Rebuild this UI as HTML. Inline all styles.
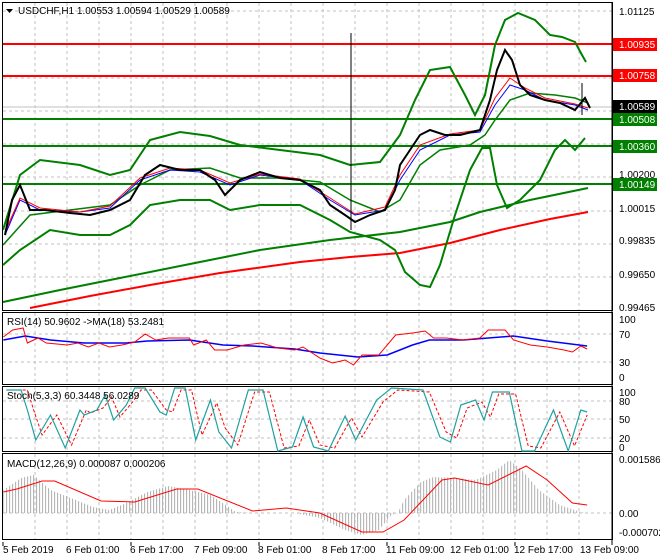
<!DOCTYPE html>
<html><head><meta charset="utf-8"><style>
html,body{margin:0;padding:0;background:#fff;width:660px;height:560px;overflow:hidden}
svg{display:block;font-family:"Liberation Sans",sans-serif}
text{font-size:10px;fill:#000}
.g{stroke:#c0c0c0;stroke-dasharray:3,3;stroke-width:1;fill:none}
.n{vector-effect:non-scaling-stroke;fill:none}
</style></head><body>
<svg width="660" height="560" viewBox="0 0 660 560">
<defs>
<pattern id="st" patternUnits="userSpaceOnUse" width="7.13" height="10"><rect x="0" y="0" width="2.4" height="10" fill="#b0b0b0"/></pattern>
</defs>
<g class="g">
<path d="M35 3V310M67 3V310M99 3V310M131 3V310M163 3V310M195 3V310M227 3V310M259 3V310M291 3V310M323 3V310M355 3V310M387 3V310M419 3V310M451 3V310M483 3V310M515 3V310M547 3V310M579 3V310"/>
<path d="M35 313V384M67 313V384M99 313V384M131 313V384M163 313V384M195 313V384M227 313V384M259 313V384M291 313V384M323 313V384M355 313V384M387 313V384M419 313V384M451 313V384M483 313V384M515 313V384M547 313V384M579 313V384"/>
<path d="M35 387V451M67 387V451M99 387V451M131 387V451M163 387V451M195 387V451M227 387V451M259 387V451M291 387V451M323 387V451M355 387V451M387 387V451M419 387V451M451 387V451M483 387V451M515 387V451M547 387V451M579 387V451"/>
<path d="M35 454V539M67 454V539M99 454V539M131 454V539M163 454V539M195 454V539M227 454V539M259 454V539M291 454V539M323 454V539M355 454V539M387 454V539M419 454V539M451 454V539M483 454V539M515 454V539M547 454V539M579 454V539"/>
<path d="M3 11H612M3 44H612M3 78H612M3 111H612M3 144H612M3 177H612M3 211H612M3 244H612M3 277H612"/>
<path d="M3 334H612M3 362H612M3 401H612M3 419H612M3 438H612M3 513H612"/>
</g>
<line x1="3" y1="107" x2="612" y2="107" stroke="#c0c0c0"/>
<line x1="3" y1="44" x2="612" y2="44" stroke="#f00" stroke-width="2"/>
<line x1="3" y1="76" x2="612" y2="76" stroke="#f00" stroke-width="2"/>
<line x1="3" y1="119" x2="612" y2="119" stroke="#007f00" stroke-width="2"/>
<line x1="3" y1="146" x2="612" y2="146" stroke="#007f00" stroke-width="2"/>
<line x1="3" y1="184" x2="612" y2="184" stroke="#007f00" stroke-width="2"/>
<polyline fill="none" stroke="#f00" stroke-width="2" points="30,308 90,296 150,285 220,273 300,262 350,257 400,253 450,243 500,230 550,219 588,212"/>
<polyline fill="none" stroke="#007f00" stroke-width="2" points="3,302 60,290 120,278 200,262 260,250 330,240 400,232 450,222 480,212 530,200 588,188"/>
<polyline fill="none" stroke="#007f00" stroke-width="2" points="3,230 20,175 40,160 80,165 110,175 130,170 150,140 180,132 210,136 240,145 280,150 320,155 350,165 380,162 400,135 415,100 430,70 450,67 465,95 475,115 485,95 495,45 505,20 518,13 535,20 550,35 562,37 575,42 582,55 586,62"/>
<polyline fill="none" stroke="#007f00" stroke-width="2" points="3,265 20,250 50,230 80,235 110,235 130,225 150,205 180,200 210,200 230,210 260,205 300,205 330,220 350,232 380,240 395,250 405,272 420,285 430,287 440,265 455,215 470,170 482,148 490,148 497,185 507,208 520,200 540,180 555,150 565,140 575,150 585,138"/>
<polyline fill="none" stroke="#007f00" stroke-width="1.5" points="3,245 30,215 70,210 110,205 140,185 170,170 210,168 240,178 280,178 320,182 350,200 380,212 400,200 420,165 440,150 470,145 485,135 495,120 510,100 530,93 555,95 575,98 588,103"/>
<polyline fill="none" stroke="#00f" stroke-width="1" points="5,235 20,200 40,210 80,212 110,208 140,180 170,170 200,172 230,185 260,175 300,180 330,200 355,215 385,210 400,180 420,150 450,135 480,132 495,105 510,85 525,90 545,100 575,105 588,110"/>
<polyline fill="none" stroke="#f00" stroke-width="1" points="5,232 20,198 40,208 80,212 110,206 140,178 170,168 200,170 230,183 260,174 300,179 330,198 355,214 385,207 400,175 420,145 450,134 480,130 495,98 510,78 525,88 545,98 575,104 588,108"/>
<polyline fill="none" stroke="#000" stroke-width="2" points="5,235 12,200 20,185 30,210 45,210 70,213 90,215 110,210 130,200 145,175 160,165 180,170 200,170 215,180 225,195 240,180 260,172 280,178 300,180 320,190 330,205 345,215 355,222 370,215 385,210 395,190 400,165 410,150 420,135 430,130 445,135 460,135 480,130 490,100 497,70 505,50 512,60 520,85 530,95 545,100 560,103 575,110 585,98 590,108"/>
<line x1="351" y1="33" x2="351" y2="230" stroke="#000"/>
<line x1="582" y1="83" x2="582" y2="115" stroke="#000"/>
<g fill="none" stroke="#000">
<rect x="2.5" y="2.5" width="610" height="308"/>
<rect x="2.5" y="312.5" width="610" height="72"/>
<rect x="2.5" y="386.5" width="610" height="65"/>
<rect x="2.5" y="453.5" width="610" height="86"/>
</g>
<g stroke="#000"><path d="M3 542V546M131 542V546M259 542V546M387 542V546M515 542V546M612 2V545"/></g>
<g transform="scale(0.4209,1)">
<polygon fill="url(#st)" points="8,513 8,490 50,478 80,475 120,490 180,500 220,507 260,510 300,503 350,492 400,486 450,490 500,495 540,506 560,512 600,513 700,513 760,518 820,530 860,535 900,530 930,515 945,513 960,500 1000,482 1030,477 1080,478 1130,480 1180,470 1210,460 1240,470 1280,490 1330,505 1380,512 1395,513"/>
<polyline class="n" stroke="#f00" stroke-width="1" points="8,492 40,489 100,481 130,481 240,501 320,502 420,489 470,489 600,511 680,508 760,513 860,532 910,532 960,520 1050,480 1080,478 1160,485 1250,466 1300,480 1360,503 1395,505"/>
<polyline class="n" stroke="#00f" stroke-width="1.5" points="8,340 60,336 120,340 200,343 300,343 350,341 450,340 530,345 600,346 700,349 760,353 850,357 920,355 980,345 1020,340 1100,340 1160,338 1220,336 1300,341 1395,346"/>
<polyline class="n" stroke="#f00" stroke-width="1" points="8,337 30,330 55,328 65,343 90,338 110,343 160,345 185,343 210,347 235,343 260,347 290,345 320,342 345,334 370,340 400,338 450,338 460,345 490,340 510,350 540,350 580,345 620,343 660,348 700,350 720,347 760,358 790,363 820,360 840,365 860,355 900,355 940,335 980,333 1010,331 1030,338 1060,338 1100,340 1140,338 1160,330 1200,330 1220,340 1260,345 1300,347 1340,350 1360,352 1380,346 1395,349"/>
<polyline class="n" stroke="#f00" stroke-dasharray="3,2" stroke-width="1" points="30,390 65,390 80,410 100,435 135,415 170,445 205,410 215,413 245,408 265,397 285,417 315,402 335,390 360,390 395,410 410,412 430,390 455,390 480,435 515,403 535,428 565,445 605,392 640,392 675,448 710,446 735,420 760,445 795,448 835,418 860,437 910,402 945,390 1020,392 1060,432 1085,438 1110,408 1145,402 1165,417 1185,394 1225,394 1255,446 1285,448 1330,412 1365,446 1395,415"/>
<polyline class="n" stroke="#20a0a0" stroke-width="1.2" points="15,390 50,390 65,410 85,440 120,415 155,448 190,410 200,415 230,410 250,395 270,420 300,405 320,388 345,388 380,412 395,415 415,388 440,388 465,440 500,400 520,432 550,448 590,390 625,390 660,451 695,447 720,417 745,447 780,451 820,416 845,440 895,400 930,388 1005,390 1045,437 1070,442 1095,405 1130,400 1150,420 1170,392 1210,392 1240,451 1270,451 1315,410 1350,451 1380,410 1395,412"/>
</g>
<path d="M6 9h7l-3.5 4z" fill="#000"/>
<text x="18" y="14">USDCHF,H1  1.00553 1.00594 1.00529 1.00589</text>
<text x="7" y="325">RSI(14) 50.9602  -&gt;MA(18) 53.2481</text>
<text x="7" y="399">Stoch(5,3,3) 60.3448 56.0289</text>
<text x="7" y="467">MACD(12,26,9) 0.000087 0.000206</text>
<g>
<text x="619" y="15">1.01125</text>
<text x="619" y="178">1.00200</text>
<text x="619" y="212">1.00015</text>
<text x="619" y="244">0.99835</text>
<text x="619" y="278">0.99650</text>
<text x="619" y="311">0.99465</text>
<rect x="613" y="38" width="44" height="13" fill="#f00"/><text x="619" y="48" style="fill:#fff">1.00935</text>
<rect x="613" y="69" width="44" height="13" fill="#f00"/><text x="619" y="79" style="fill:#fff">1.00758</text>
<rect x="613" y="100" width="44" height="13" fill="#000"/><text x="619" y="110" style="fill:#fff">1.00589</text>
<rect x="613" y="113" width="44" height="13" fill="#007f00"/><text x="619" y="123" style="fill:#fff">1.00508</text>
<rect x="613" y="140" width="44" height="13" fill="#007f00"/><text x="619" y="150" style="fill:#fff">1.00360</text>
<rect x="613" y="178" width="44" height="13" fill="#007f00"/><text x="619" y="188" style="fill:#fff">1.00149</text>
<text x="619" y="323">100</text><text x="619" y="338">70</text><text x="619" y="366">30</text><text x="619" y="381">0</text>
<text x="619" y="396">100</text><text x="619" y="405">80</text><text x="619" y="423">50</text><text x="619" y="442">20</text><text x="619" y="451">0</text>
<text x="619" y="463">0.001586</text><text x="619" y="517">0.00</text><text x="619" y="536">-0.000702</text>
</g>
<g>
<text x="3" y="553">5 Feb 2019</text>
<text x="66" y="553">6 Feb 01:00</text>
<text x="130" y="553">6 Feb 17:00</text>
<text x="194" y="553">7 Feb 09:00</text>
<text x="258" y="553">8 Feb 01:00</text>
<text x="322" y="553">8 Feb 17:00</text>
<text x="386" y="553">11 Feb 09:00</text>
<text x="450" y="553">12 Feb 01:00</text>
<text x="514" y="553">12 Feb 17:00</text>
<text x="580" y="553">13 Feb 09:00</text>
</g>
</svg>
</body></html>
